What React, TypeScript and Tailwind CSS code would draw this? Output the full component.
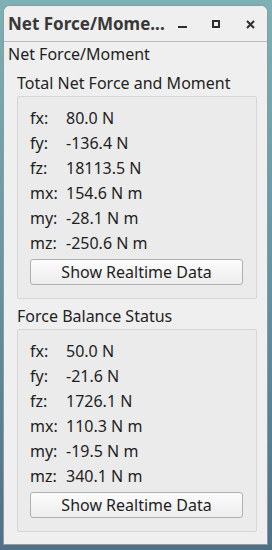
const font = { fontFamily: '"Noto Sans", "DejaVu Sans", sans-serif' };

type Row = [string, string];

const totals: Row[] = [
  ["fx:", "80.0 N"],
  ["fy:", "-136.4 N"],
  ["fz:", "18113.5 N"],
  ["mx:", "154.6 N m"],
  ["my:", "-28.1 N m"],
  ["mz:", "-250.6 N m"],
];

const balance: Row[] = [
  ["fx:", "50.0 N"],
  ["fy:", "-21.6 N"],
  ["fz:", "1726.1 N"],
  ["mx:", "110.3 N m"],
  ["my:", "-19.5 N m"],
  ["mz:", "340.1 N m"],
];

function Group({ title, rows }: { title: string; rows: Row[] }) {
  return (
    <div>
      <div className="h-[30px] pl-[13px] pt-[5px] text-[16px] leading-[24px] text-[#232323]">{title}</div>
      <div className="ml-[13px] mr-[10px] rounded-[2px] border border-[#d6d6d6] bg-[#ebebeb] pl-[12px] pr-[13px] pt-[8px] pb-[13px]">
        {rows.map(([k, v]) => (
          <div key={k} className="flex h-[25px] items-center text-[16px] text-[#1e1e1e]">
            <span className="w-[36px]">{k}</span>
            <span>{v}</span>
          </div>
        ))}
        <button className="mt-[4px] h-[26px] w-full rounded-[3px] border border-[#b0b0b0] bg-gradient-to-b from-[#fcfcfc] to-[#ededed] text-[16px] leading-[24px] text-[#1e1e1e]">
          Show Realtime Data
        </button>
      </div>
    </div>
  );
}

export default function App() {
  return (
    <div
      className="flex h-[550px] w-[272px] flex-col bg-gradient-to-b from-[#7db1b4] via-[#6594a3] to-[#4f7089] pt-[5px] pr-[4px] pb-[5px] pl-[3px]"
      style={font}
    >
      <div className="flex flex-1 flex-col overflow-hidden rounded-t-[7px] border border-[#8f9a9c] bg-[#efefef]">
        <div className="flex h-[36px] shrink-0 items-center border-b border-[#bcbcbc] bg-[#efefef] pt-[1px]">
          <span className="flex-1 whitespace-nowrap pl-[4px] text-[17px] font-bold text-[#383838]">Net Force/Mome...</span>
          <div className="flex items-center text-[#2e2e2e]">
            <div className="flex w-[34px] justify-center">
              <svg width="9" height="8" viewBox="0 0 9 8"><rect x="0" y="6" width="9" height="2" fill="currentColor" /></svg>
            </div>
            <div className="flex w-[34px] justify-center">
              <svg width="8" height="8" viewBox="0 0 8 8"><rect x="1" y="1" width="6" height="6" fill="none" stroke="currentColor" strokeWidth="2" /></svg>
            </div>
            <div className="flex w-[34px] justify-center">
              <svg width="9" height="9" viewBox="0 0 9 9"><path d="M1 1 L8 8 M8 1 L1 8" stroke="currentColor" strokeWidth="2" /></svg>
            </div>
          </div>
        </div>
        <div className="flex-1">
          <div className="pl-[4px] pt-[2px] text-[16px] leading-[20px] text-[#1e1e1e]">Net Force/Moment</div>
          <div className="pt-[2px]">
            <Group title="Total Net Force and Moment" rows={totals} />
            <Group title="Force Balance Status" rows={balance} />
          </div>
        </div>
      </div>
    </div>
  );
}
